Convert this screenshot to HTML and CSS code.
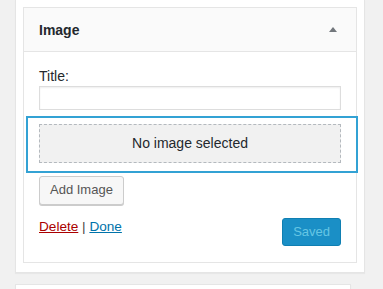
FILE: index.html
```html
<html>
	<head>
		<title>Image widget</title>
		<meta name="viewport" content="width=device-width, initial-scale=1.0">
		<link rel="stylesheet" href="styles.css">
	</head>
	<body>
		<div class="panel">
			<div class="widget">
				<div class="widget-top">
					<span class="widget-title">Image</span>
					<span class="toggle"></span>
				</div>
				<div class="widget-inside">
					<label class="label" for="title">Title:</label>
					<input type="text" id="title" class="title-input" />
					<div class="focus-box">
						<div class="placeholder">No image selected</div>
					</div>
					<button class="button">Add Image</button>
					<div class="controls">
						<div class="links">
							<a href="#" class="delete">Delete</a> | <a href="#" class="done">Done</a>
						</div>
						<button class="button button-primary" disabled>Saved</button>
					</div>
				</div>
			</div>
		</div>
		<div class="panel panel-next"></div>
	</body>
</html>
```

FILE: styles.css
```css
        html, body {
            margin: 0;
            background: #f1f1f1;
            font-family: "Liberation Sans", Arial, sans-serif;
            color: #23282d;
        }
        body {
            height: 289px;
            overflow: hidden;
        }
        .panel {
            margin-left: 15px;
            width: 334px;
            padding: 7px 7px 9px 7px;
            background: #fff;
            border: 1px solid #e5e5e5;
            border-top: none;
            box-shadow: 0 1px 1px rgba(0,0,0,0.04);
        }
        .panel-next {
            margin-top: 11px;
            height: 4px;
            padding: 0;
            border-top: 1px solid #e5e5e5;
        }
        .widget {
            border: 1px solid #e5e5e5;
            background: #fff;
        }
        .widget-top {
            display: flex;
            align-items: center;
            justify-content: space-between;
            height: 43px;
            padding: 0 19px 0 15px;
            background: #fafafa;
            border-bottom: 1px solid #e5e5e5;
        }
        .widget-title {
            font-size: 14px;
            font-weight: bold;
            color: #23282d;
        }
        .toggle {
            width: 0;
            height: 0;
            border-left: 4px solid transparent;
            border-right: 4px solid transparent;
            border-bottom: 5px solid #72777c;
        }
        .widget-inside {
            padding: 14px 15px 16px 15px;
        }
        .label {
            display: block;
            font-size: 14px;
            line-height: 20px;
            color: #23282d;
        }
        .title-input {
            display: block;
            box-sizing: border-box;
            width: 100%;
            height: 24px;
            margin: 0;
            border: 1px solid #ddd;
            box-shadow: inset 0 1px 2px rgba(0,0,0,0.07);
            outline: none;
        }
        .focus-box {
            margin: 6px -17px 0 -13px;
            padding: 6px 15px 8px 11px;
            border: 2px solid #33a2d4;
        }
        .placeholder {
            box-sizing: border-box;
            height: 39px;
            line-height: 37px;
            text-align: center;
            font-size: 14px;
            color: #23282d;
            background: #f1f1f1;
            border: 1px dashed #b4b9be;
        }
        .button {
            display: block;
            box-sizing: border-box;
            margin-top: 3px;
            height: 29px;
            padding: 0 10px 1px;
            font-family: "Liberation Sans", Arial, sans-serif;
            font-size: 13px;
            line-height: 26px;
            color: #555;
            background: #f7f7f7;
            border: 1px solid #ccc;
            border-radius: 3px;
            box-shadow: 0 1px 0 #ccc;
        }
        .controls {
            display: flex;
            justify-content: space-between;
            align-items: flex-start;
            margin-top: 13px;
        }
        .links {
            font-size: 13.6px;
            line-height: 18px;
            color: #444;
        }
        .delete {
            color: #a00;
        }
        .done {
            color: #0073aa;
        }
        .button-primary {
            margin-top: 0;
            height: 28px;
            color: #66c6e4;
            background: #1a8fc6;
            border-color: #0f7fb2;
            box-shadow: none;
        }
```
